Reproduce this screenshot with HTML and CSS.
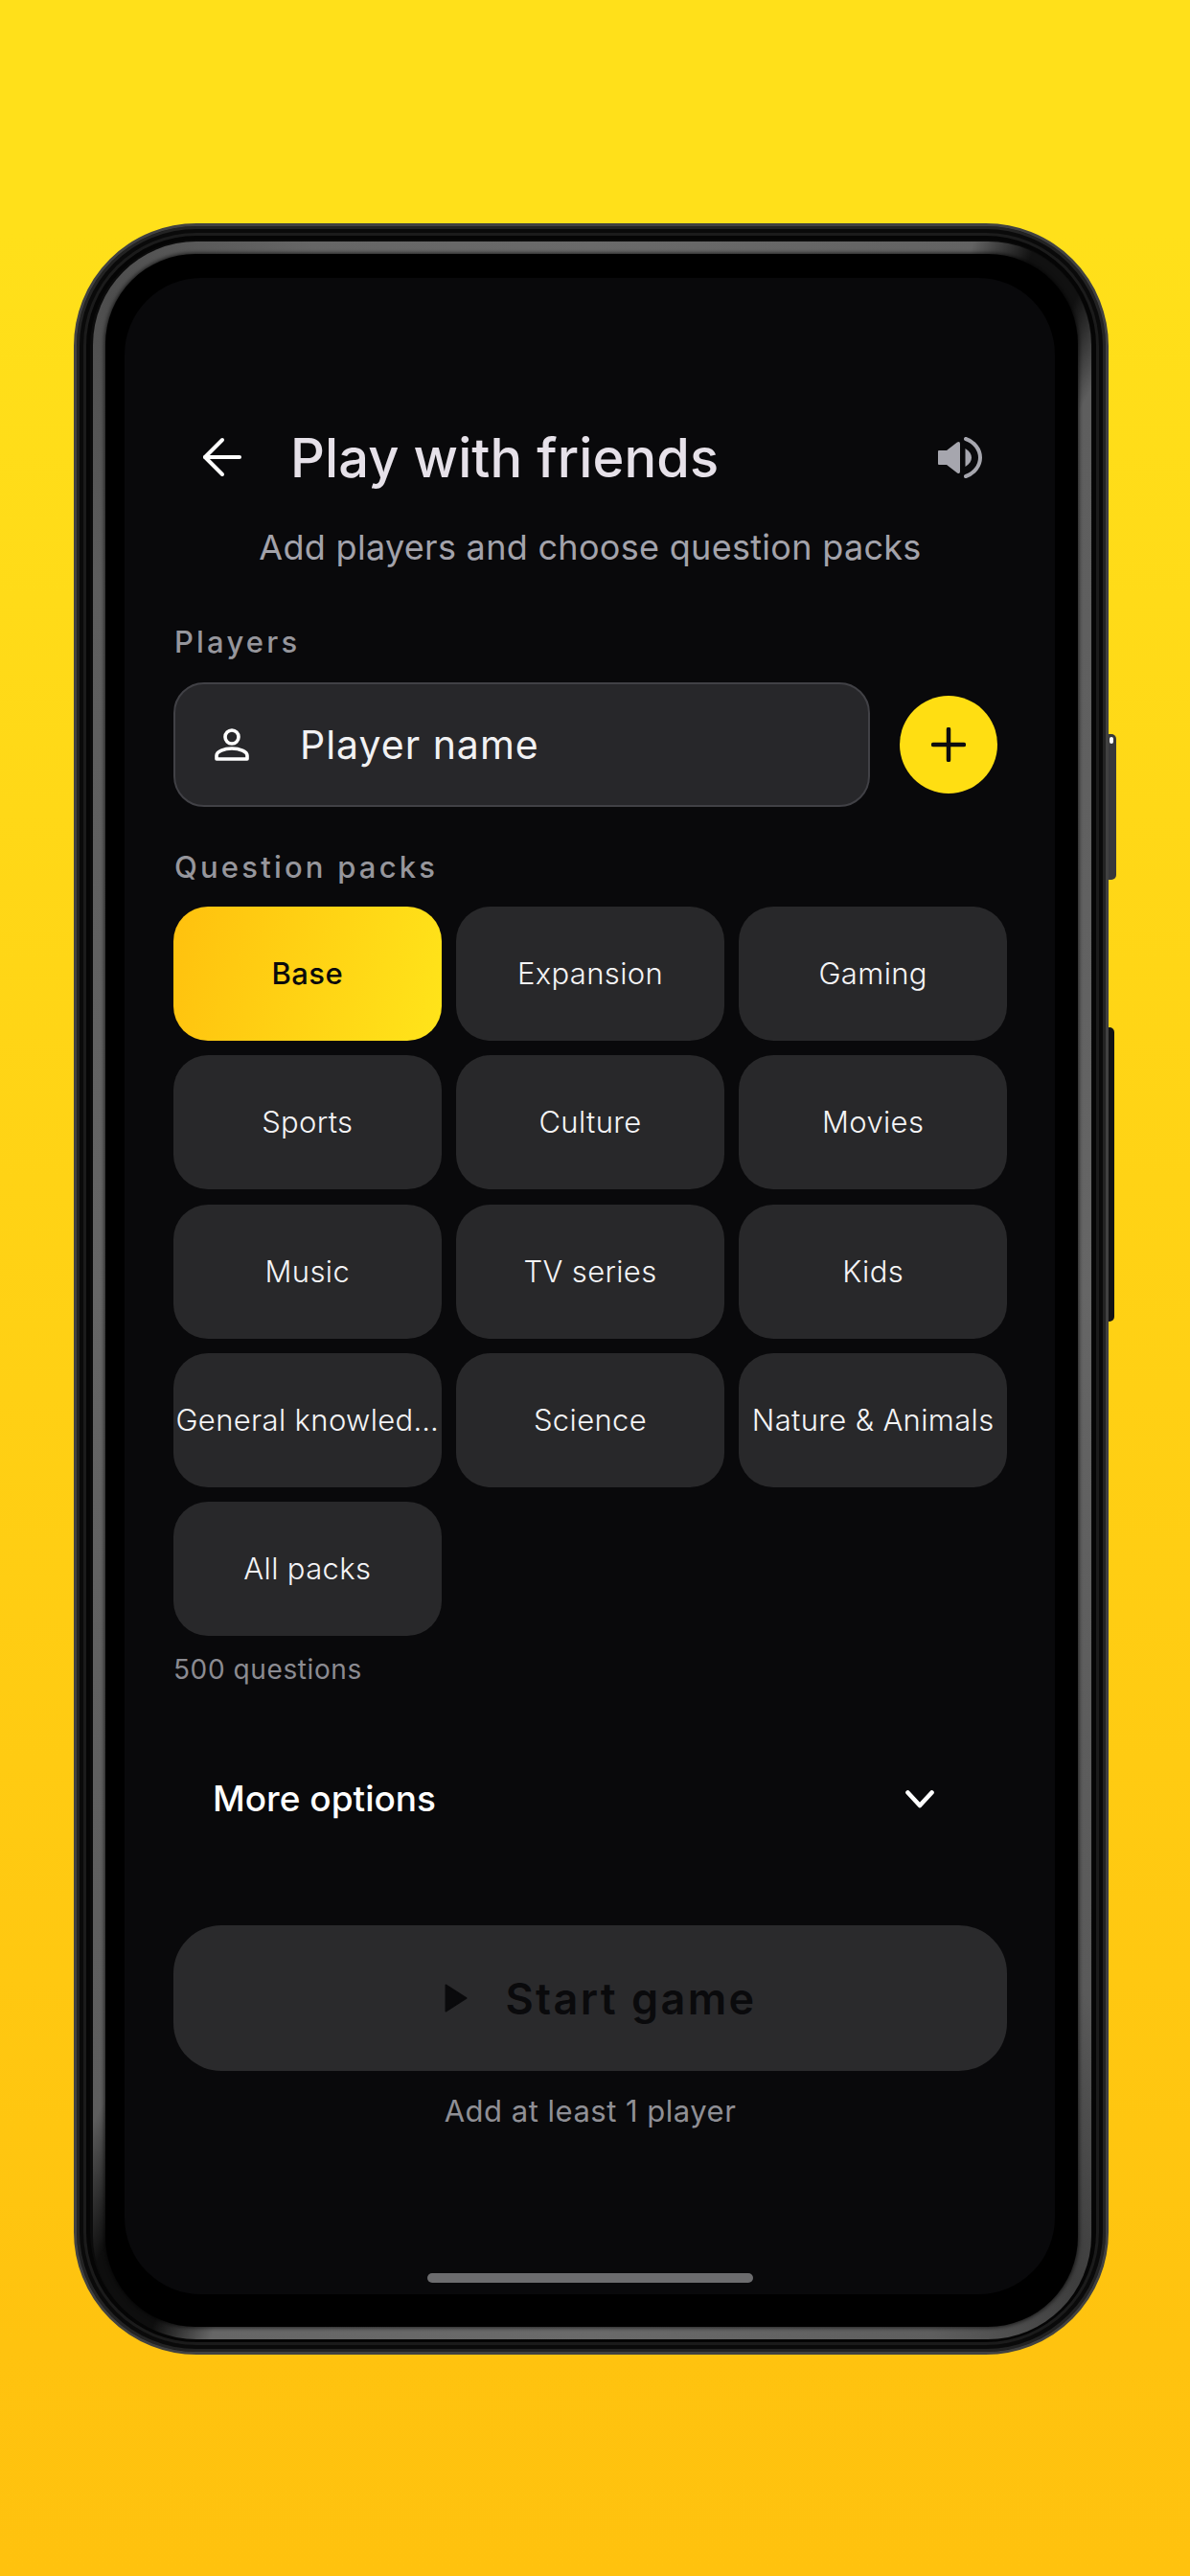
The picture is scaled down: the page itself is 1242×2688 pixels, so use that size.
FILE: index.html
```html
<!DOCTYPE html>
<html>
<head>
    <title>Play with friends</title>
    <link rel="stylesheet" href="styles.css">
</head>
<body>
    <div class="phone">
        <span class="side-btn power"></span>
        <span class="side-btn volume"></span>
        <div class="band">
            <div class="bezel">
                <main class="screen">
                    <header class="top-bar">
                        <svg class="back-icon" viewBox="0 0 42 42" width="42" height="42" fill="none" stroke="#fff" stroke-width="4" stroke-linecap="round" stroke-linejoin="round">
                            <path d="M3 21H39"/>
                            <path d="M21 3L3 21L21 39"/>
                        </svg>
                        <h1 class="title">Play with friends</h1>
                        <svg class="sound-icon" viewBox="0 0 46 43" width="46" height="43" fill="#a6a6ae">
                            <path d="M0 15Q0 14 1 14H9L20 5.5Q23 4 23 7V36Q23 39 20 37.5L9 29H1Q0 29 0 28Z"/>
                            <path d="M28.5 12C33 15 35 18 35 21.5C35 25 33 28 28.5 31Z"/>
                            <path d="M29 2C38 5 44 13 44 21.5C44 30 38 38 29 41" fill="none" stroke="#a6a6ae" stroke-width="4" stroke-linecap="round"/>
                        </svg>
                    </header>
                    <p class="subtitle">Add players and choose question packs</p>

                    <div class="label players-label">Players</div>
                    <div class="player-row">
                        <div class="name-field">
                            <svg class="person-icon" viewBox="0 0 36 34" width="36" height="34" fill="none" stroke="#fff" stroke-width="3.6" stroke-linejoin="round">
                                <circle cx="18" cy="9" r="7"/>
                                <path d="M2 32H34V28.500C34 24 26 21 18 21C10 21 2 24 2 28.500Z"/>
                            </svg>
                            <span class="name-placeholder">Player name</span>
                        </div>
                        <button class="add-btn" type="button" aria-label="Add player">
                            <svg viewBox="0 0 36 36" width="36" height="36" fill="none" stroke="#0d0d0f" stroke-width="4.500" stroke-linecap="round">
                                <path d="M2 18H34"/>
                                <path d="M18 2V34"/>
                            </svg>
                        </button>
                    </div>

                    <div class="label packs-label">Question packs</div>
                    <div class="packs">
                        <div class="pack selected">Base</div>
                        <div class="pack">Expansion</div>
                        <div class="pack">Gaming</div>
                        <div class="pack">Sports</div>
                        <div class="pack">Culture</div>
                        <div class="pack">Movies</div>
                        <div class="pack">Music</div>
                        <div class="pack">TV series</div>
                        <div class="pack">Kids</div>
                        <div class="pack">General knowled…</div>
                        <div class="pack">Science</div>
                        <div class="pack">Nature &amp; Animals</div>
                        <div class="pack">All packs</div>
                    </div>
                    <div class="count">500 questions</div>

                    <div class="more-row">
                        <span class="more-text">More options</span>
                        <svg class="chevron" viewBox="0 0 30 19" width="30" height="19" fill="none" stroke="#fff" stroke-width="4.600" stroke-linecap="round" stroke-linejoin="round">
                            <path d="M2.500 2.500L15 16L27.500 2.500"/>
                        </svg>
                    </div>

                    <button class="start-btn" type="button" disabled>
                        <svg viewBox="0 0 24 30" width="24" height="30" fill="#0a0a0c" stroke="#0a0a0c" stroke-width="2" stroke-linejoin="round">
                            <path d="M1.500 1.500L22.500 15L1.500 28.500Z"/>
                        </svg>
                        <span>Start game</span>
                    </button>
                    <div class="hint">Add at least 1 player</div>

                    <div class="home-bar"></div>
                </main>
            </div>
        </div>
    </div>
</body>
</html>
```

FILE: styles.css
```css
* {
    box-sizing: border-box;
}

html, body {
    margin: 0;
    padding: 0;
}

body {
    width: 1242px;
    height: 2688px;
    padding: 233px 0 0 77px;
    overflow: hidden;
    font-family: Inter, "Liberation Sans", sans-serif;
    background-image: linear-gradient(to bottom, #ffe01a 9%, #ffc30f 91%, #ffc20e 100%);
}

/* device frame */
.phone {
    position: relative;
    display: flex;
    width: 1080px;
    height: 2224px;
    padding: 16px 15px 13px 17px;
    border: 3px solid #414141;
    border-radius: 128px;
    background: #0b0b0b;
    box-shadow: inset 0 0 0 3px #232323, inset 0 0 0 7px #0a0a0a, inset 0 0 0 10px #1b1b1b, inset 0 0 0 14px #050505;
}

.side-btn {
    position: absolute;
    border-radius: 0 5px 5px 0;
}

.power {
    left: 1077px;
    top: 530px;
    width: 8px;
    height: 152px;
    background: #38383a;
}

.power::before {
    content: "";
    position: absolute;
    left: 1px;
    top: 3px;
    width: 4px;
    height: 7px;
    border-radius: 2px;
    background: #fff;
}

.volume {
    left: 1077px;
    top: 836px;
    width: 6px;
    height: 307px;
    background: #121213;
}

.band {
    flex: 1;
    display: flex;
    padding: 13px 14px 13px 13px;
    border-radius: 108px;
    background: conic-gradient(#6a6a6a 0deg, #636363 20deg, #111 23deg, #111 26deg, #5e5e5e 29deg, #666 90deg, #5a5a5a 145deg, #3e3e3e 154deg, #5e5e5e 162deg, #6a6a6a 180deg, #666 200deg, #0e0e0e 203deg, #0e0e0e 207deg, #5e5e5e 211deg, #666 270deg, #5e5e5e 325deg, #4e4e4e 334deg, #666 345deg, #6a6a6a 360deg);
}

.bezel {
    flex: 1;
    display: flex;
    padding: 25px 24px 34px 20px;
    border-radius: 94px;
    background: #000;
    box-shadow: 0 0 4px 1px rgba(0, 0, 0, 0.7);
}

.screen {
    flex: 1;
    display: flex;
    flex-direction: column;
    padding: 147px 50px 12px 51px;
    border-radius: 80px;
    background: #09090b;
}

/* header */
.top-bar {
    display: flex;
    align-items: center;
    height: 80px;
    padding: 0 26px 0 30px;
}

.back-icon {
    flex: none;
}

.title {
    flex: 1;
    margin: 0 0 0 50px;
    padding-top: 2px;
    font-size: 56px;
    font-weight: 500;
    line-height: 80px;
    letter-spacing: 0.1px;
    color: #e6e1e9;
}

.sound-icon {
    flex: none;
}

.subtitle {
    margin: 32px 0 0;
    font-size: 36px;
    line-height: 44px;
    letter-spacing: 0.3px;
    text-align: center;
    color: #a3a3ab;
}

.label {
    margin-left: 1px;
    font-size: 31px;
    font-weight: 500;
    line-height: 40px;
    letter-spacing: 3.2px;
    color: #96969c;
}

.players-label {
    margin-top: 57px;
}

.packs-label {
    margin-top: 43px;
}

/* player input */
.player-row {
    display: flex;
    align-items: center;
    gap: 31px;
    margin-top: 22px;
}

.name-field {
    display: flex;
    align-items: center;
    gap: 53px;
    width: 727px;
    height: 130px;
    padding-left: 41px;
    border: 2px solid #414146;
    border-radius: 32px;
    background: #27272a;
}

.name-placeholder {
    font-size: 41px;
    line-height: 50px;
    letter-spacing: 1px;
    color: #f1f1f3;
}

.add-btn {
    display: flex;
    align-items: center;
    justify-content: center;
    width: 102px;
    height: 102px;
    padding: 0;
    border: none;
    border-radius: 50%;
    background: #ffde12;
}

/* question packs */
.packs {
    display: grid;
    grid-template-columns: repeat(3, 1fr);
    grid-auto-rows: 140px;
    gap: 15.3px 15.5px;
    margin-top: 21px;
}

.pack {
    min-width: 0;
    border-radius: 36px;
    background: #28282a;
    font-size: 31px;
    font-weight: 350;
    line-height: 140px;
    letter-spacing: 0.35px;
    text-align: center;
    white-space: nowrap;
    color: #f4f4f6;
}

.pack.selected {
    background-image: linear-gradient(105deg, #ffc10e, #ffe41a);
    font-weight: 500;
    letter-spacing: 0.4px;
    color: #0a0a0c;
}

.count {
    margin-top: 17px;
    font-size: 28px;
    line-height: 36px;
    letter-spacing: 0.6px;
    color: #8b8b91;
}

.more-row {
    display: flex;
    align-items: center;
    justify-content: space-between;
    height: 100px;
    margin-top: 67px;
    padding: 0 76px 0 41px;
}

.more-text {
    font-size: 37px;
    font-weight: 500;
    line-height: 50px;
    color: #fff;
}

/* start button */
.start-btn {
    display: flex;
    align-items: center;
    justify-content: center;
    gap: 39px;
    height: 152px;
    margin-top: 82px;
    padding: 0 0 0 22px;
    border: none;
    border-radius: 50px;
    background: #2a2a2c;
    font-family: inherit;
    font-size: 45px;
    font-weight: 600;
    letter-spacing: 2.4px;
    color: #0a0a0c;
}

.hint {
    margin-top: 22px;
    font-size: 31px;
    line-height: 40px;
    letter-spacing: 0.5px;
    text-align: center;
    color: #8f8f95;
}

.home-bar {
    align-self: center;
    width: 340px;
    height: 10px;
    margin-top: auto;
    border-radius: 5px;
    background: #6c6c6e;
}
```
